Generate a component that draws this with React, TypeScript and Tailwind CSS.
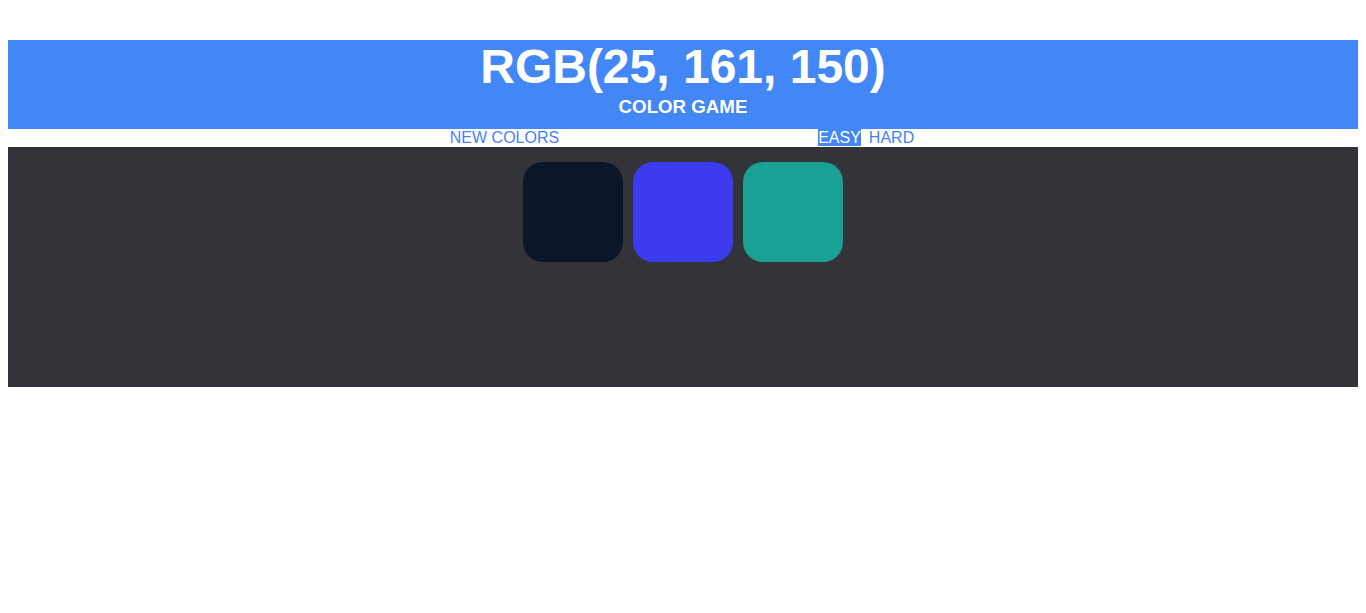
const squares = ["#0b1729", "#3c3bee", "#19a196"];

export default function App() {
  return (
    <div className="min-h-screen bg-white p-2 font-['Liberation_Sans',Arial,sans-serif]">
      <div className="mt-8 bg-[#4287f5] pb-[12px] text-center text-white">
        <h1 className="text-[48px] font-bold leading-[54px]">RGB(25, 161, 150)</h1>
        <h3 className="mt-[2px] text-[18.72px] font-bold leading-[21px]">COLOR GAME</h3>
      </div>

      <div className="flex h-[18px] items-start justify-center pr-[2px] text-[16px] leading-[18px] text-[#4a7ff5]">
        <button className="uppercase">New Colors</button>
        <span className="w-[259px]" />
        <button className="h-[17px] bg-[#4287f5] uppercase text-white">Easy</button>
        <button className="ml-[8px] uppercase">Hard</button>
      </div>

      <div className="h-[240px] bg-[#333439] pt-[15px]">
        <div className="flex justify-center gap-[10px]">
          {squares.map((c) => (
            <div key={c} className="h-[100px] w-[100px] rounded-[20px]" style={{ backgroundColor: c }} />
          ))}
        </div>
      </div>
    </div>
  );
}
